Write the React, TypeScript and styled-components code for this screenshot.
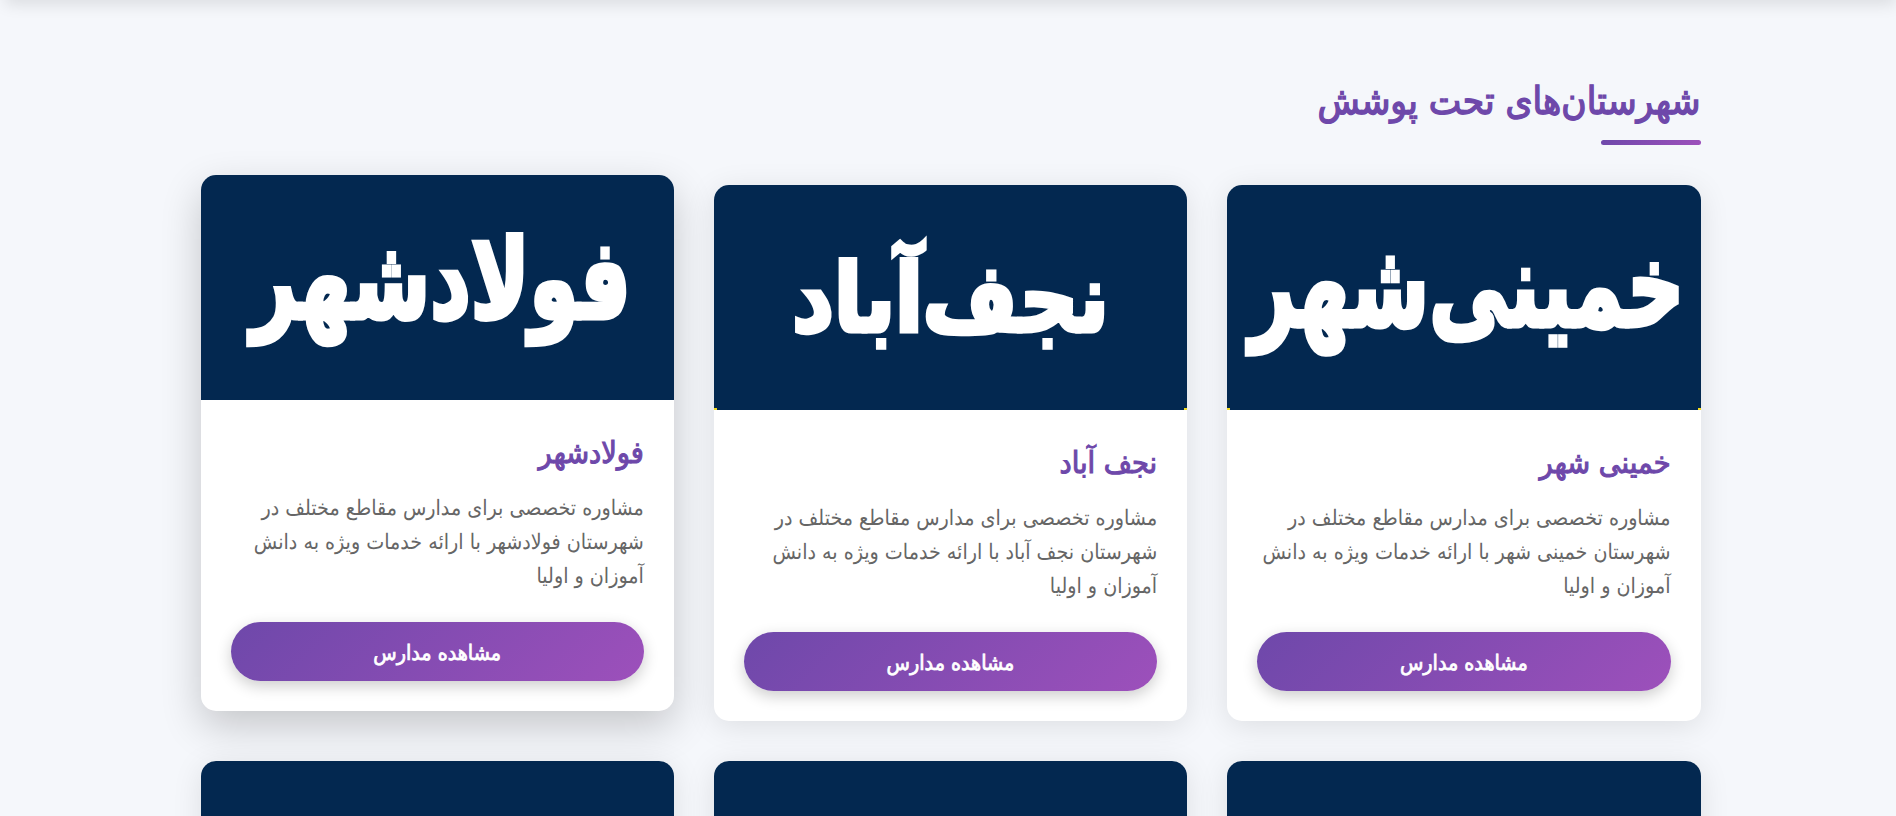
import React from "react";
import styled, { createGlobalStyle } from "styled-components";

const GlobalStyle = createGlobalStyle`
  * { box-sizing: border-box; margin: 0; padding: 0; }
  body {
    background: #f5f7fb;
    overflow: hidden;
    font-family: "DejaVu Sans Condensed", "DejaVu Sans", sans-serif;
    text-rendering: geometricPrecision;
  }
`;

const Page = styled.div`
  direction: rtl;
  height: 816px;
  overflow: hidden;
  padding-left: 5px;
  color: #333;
`;

const HeaderEdge = styled.header`
  height: 20px;
  margin-top: -20px;
  background: #fff;
  box-shadow: 0 5px 15px rgba(0, 0, 0, 0.1);
`;

const Container = styled.main`
  width: 1500px;
  margin: 0 auto;
  padding-top: 70px;
`;

const SectionTitle = styled.h2`
  height: 75px;
  margin-bottom: 40px;
  display: flex;
  flex-direction: column;
  justify-content: space-between;
  font-size: 38.4px;
  line-height: 64px;
  font-weight: 400;
  -webkit-text-stroke: 0.035em currentColor;
  color: #6e48aa;

  &::after {
    content: "";
    width: 100px;
    height: 5px;
    border-radius: 5px;
    background: linear-gradient(135deg, #6e48aa, #9d50bb);
  }
`;

const Grid = styled.div`
  display: grid;
  grid-template-columns: repeat(3, 1fr);
  gap: 40px;
`;

const Card = styled.article<{ $raised?: boolean }>`
  height: 536px;
  border-radius: 15px;
  overflow: hidden;
  background: #fff;
  transform: ${(p) => (p.$raised ? "translateY(-10px)" : "none")};
  box-shadow: ${(p) =>
    p.$raised ? "0 15px 40px rgba(0,0,0,0.2)" : "0 5px 30px rgba(0,0,0,0.1)"};
`;

const Banner = styled.div<{ $corners?: boolean }>`
  height: 225px;
  background:
    ${(p) =>
      p.$corners
        ? "linear-gradient(#f5dc1e, #f5dc1e) left bottom / 3px 2px no-repeat, linear-gradient(#f5dc1e, #f5dc1e) right bottom / 3px 2px no-repeat,"
        : ""}
    #032850;
`;

const Lettering = styled.svg`
  display: block;
  width: 100%;
  height: 100%;
  fill: #fff;
  stroke: #fff;
  stroke-width: 5px;
  font-family: "DejaVu Sans", sans-serif;
  font-weight: 700;
`;

const Body = styled.div`
  padding: 31px 30px 30px;
`;

const CityName = styled.h3`
  font-size: 30.3px;
  line-height: 45px;
  margin-bottom: 16px;
  font-weight: 400;
  -webkit-text-stroke: 0.035em currentColor;
  color: #6e48aa;
`;

const Summary = styled.p`
  font-size: 21.25px;
  line-height: 34px;
  height: 102px;
  margin-bottom: 28px;
  color: #666;
`;

const SchoolsButton = styled.button`
  display: block;
  width: 100%;
  height: 59px;
  padding-top: 3px;
  border: 0;
  border-radius: 50px;
  background: linear-gradient(135deg, #6e48aa, #9d50bb);
  box-shadow: 0 5px 15px rgba(0, 0, 0, 0.2);
  color: #fff;
  font: 400 21.3px "DejaVu Sans Condensed", "DejaVu Sans", sans-serif;
  -webkit-text-stroke: 0.035em currentColor;
  text-rendering: geometricPrecision;
`;

type City = {
  name: string;
  banner: string;
  center: number;
  baseline: number;
  size: number;
  stretch: number;
  raised?: boolean;
};

const cities: City[] = [
  { name: "خمینی شهر", banner: "خمینی‌شهر", center: 240, baseline: 141, size: 116, stretch: 0.683 },
  { name: "نجف آباد", banner: "نجف‌آباد", center: 236.5, baseline: 146, size: 94, stretch: 0.865 },
  { name: "فولادشهر", banner: "فولادشهر", center: 240, baseline: 143, size: 110, stretch: 0.718, raised: true },
];

export default function App() {
  return (
    <Page>
      <GlobalStyle />
      <HeaderEdge />
      <Container>
        <SectionTitle>شهرستان‌های تحت پوشش</SectionTitle>
        <Grid>
          {cities.map((c) => (
            <Card key={c.name} $raised={c.raised}>
              <Banner $corners={!c.raised}>
                <Lettering viewBox="0 0 473.33 225">
                  <text
                    transform={`translate(${c.center} ${c.baseline}) scale(${c.stretch} 1)`}
                    textAnchor="middle"
                    fontSize={c.size}
                  >
                    {c.banner}
                  </text>
                </Lettering>
              </Banner>
              <Body>
                <CityName>{c.name}</CityName>
                <Summary>
                  {`مشاوره تخصصی برای مدارس مقاطع مختلف در شهرستان ${c.name} با ارائه خدمات ویژه به دانش آموزان و اولیا`}
                </Summary>
                <SchoolsButton>مشاهده مدارس</SchoolsButton>
              </Body>
            </Card>
          ))}
          {[0, 1, 2].map((i) => (
            <Card key={i}>
              <Banner />
            </Card>
          ))}
        </Grid>
      </Container>
    </Page>
  );
}
